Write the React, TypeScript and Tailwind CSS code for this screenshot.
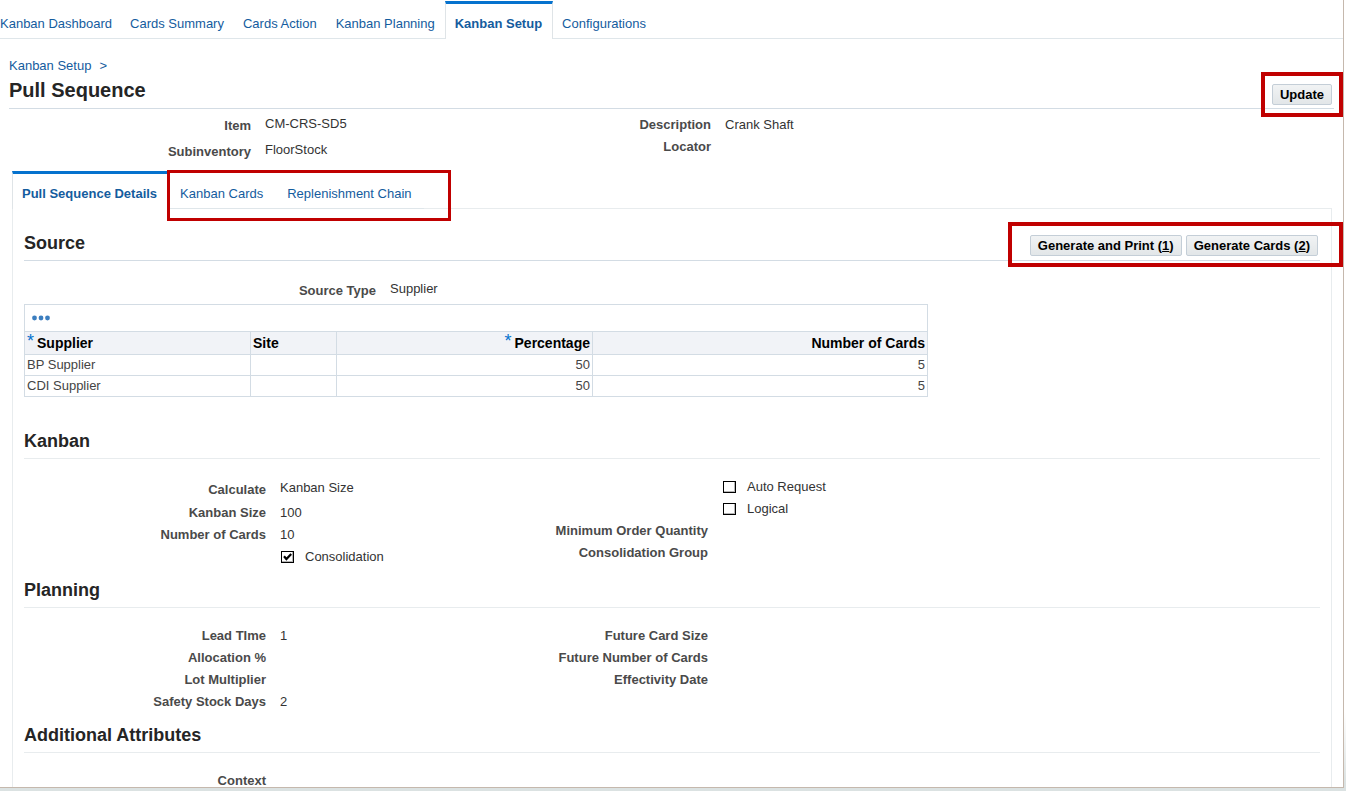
import React, { useState } from 'react';
import clsx from 'clsx';

interface TabItem {
  label: string;
  active?: boolean;
}

const mainTabs: TabItem[] = [
  { label: 'Kanban Dashboard' },
  { label: 'Cards Summary' },
  { label: 'Cards Action' },
  { label: 'Kanban Planning' },
  { label: 'Kanban Setup', active: true },
  { label: 'Configurations' },
];

const suppliers = [
  { supplier: 'BP Supplier', site: '', percentage: 50, cards: 5 },
  { supplier: 'CDI Supplier', site: '', percentage: 50, cards: 5 },
];

function Tab({ label, active, className }: TabItem & { className?: string }) {
  return (
    <a
      href="#"
      aria-current={active ? 'page' : undefined}
      className={clsx(
        'h-[38px] shrink-0 border-t-[3px] pt-3 leading-[15px] whitespace-nowrap text-[#145c9e]',
        active
          ? 'border-x border-x-[#dfe4e7] border-t-[#0572ce] pr-[10px] pl-[9px] font-bold'
          : 'border-b border-t-transparent border-b-[#dfe6ea]',
        className
      )}
    >
      {label}
    </a>
  );
}

function Button({ children }: { children: React.ReactNode }) {
  return (
    <button
      type="button"
      className="h-[21px] rounded-[2px] border border-[#c4ced7] bg-linear-to-b from-[#f1f3f4] to-[#e2e6e8] px-[7px] leading-[18px] font-bold whitespace-nowrap text-black"
    >
      {children}
    </button>
  );
}

// tall rows hang the label slightly lower than the value
function Field({ label, value, tall, labelWidth = 'w-[242px]' }: { label: string; value?: string; tall?: boolean; labelWidth?: string }) {
  return (
    <div className={clsx('flex gap-[14px]', tall ? 'h-6' : 'h-[22px]')}>
      <dt className={clsx('shrink-0 text-right font-bold text-[#4a4a4a]', labelWidth, tall ? 'leading-6' : 'leading-[22px]')}>{label}</dt>
      <dd className={clsx('text-[#333]', tall ? 'leading-5' : 'leading-[22px]')}>{value}</dd>
    </div>
  );
}

function CheckField({ label, defaultChecked = false }: { label: string; defaultChecked?: boolean }) {
  const [checked, setChecked] = useState(defaultChecked);
  return (
    <div className="flex h-[22px] items-center pl-[257px]">
      <label className="flex items-center gap-[11px] text-[#333]">
        <span className="relative flex">
          <input
            type="checkbox"
            checked={checked}
            onChange={(e) => setChecked(e.target.checked)}
            className="h-3 w-[13px] appearance-none border border-black bg-white shadow-[inset_-1px_-1px_0_#b5b5b5]"
          />
          {checked && (
            <svg viewBox="0 0 13 12" className="pointer-events-none absolute inset-0 h-3 w-[13px]" fill="none" stroke="#000" strokeWidth="2.2">
              <path d="M3 5.2 5.4 8 10.2 3" />
            </svg>
          )}
        </span>
        {label}
      </label>
    </div>
  );
}

function SectionHeader({ title, children, strong }: { title: string; children?: React.ReactNode; strong?: boolean }) {
  return (
    <div className={clsx('relative flex h-9 items-center justify-between border-b', strong ? 'border-[#d3dce4]' : 'border-[#e8ecee]')}>
      <h2 className="text-lg leading-7 font-bold text-[#252525]">{title}</h2>
      {children}
    </div>
  );
}

function Highlight({ className }: { className: string }) {
  return <div className={clsx('pointer-events-none absolute border-[#c00000]', className)} />;
}

function Required() {
  return <span className="self-start text-[18px] leading-[18px] font-normal text-[#0572ce]">*</span>;
}

function SupplierTable() {
  const cell = 'border border-[#d3dce4] px-[2px]';
  return (
    <div className="mt-px w-[904px] max-w-full">
      <div className="flex h-[27px] items-center border border-b-0 border-[#d3dce4] pl-[7px]">
        <button type="button" aria-label="More actions">
          <svg width="18" height="6" viewBox="0 0 18 6" fill="#3c7ebf">
            <circle cx="2.5" cy="3" r="2.4" />
            <circle cx="9" cy="3" r="2.4" />
            <circle cx="15.5" cy="3" r="2.4" />
          </svg>
        </button>
      </div>
      <table className="w-full table-fixed border-collapse text-[#444]">
        <colgroup>
          <col className="w-[226px]" />
          <col className="w-[86px]" />
          <col className="w-[256px]" />
          <col />
        </colgroup>
        <thead className="bg-[#f1f3f7] text-sm leading-[22px] text-black">
          <tr className="h-[23px]">
            <th className={clsx(cell, 'py-0 text-left')}>
              <div className="flex h-[22px] gap-[3px]"><Required />Supplier</div>
            </th>
            <th className={clsx(cell, 'py-0 text-left')}>Site</th>
            <th className={clsx(cell, 'py-0')}>
              <div className="flex h-[22px] justify-end gap-[3px]"><Required />Percentage</div>
            </th>
            <th className={clsx(cell, 'py-0 text-right')}>Number of Cards</th>
          </tr>
        </thead>
        <tbody className="leading-5">
          {suppliers.map((row) => (
            <tr key={row.supplier} className="h-[21px]">
              <td className={clsx(cell, 'py-0')}>{row.supplier}</td>
              <td className={clsx(cell, 'py-0')}>{row.site}</td>
              <td className={clsx(cell, 'py-0 text-right')}>{row.percentage}</td>
              <td className={clsx(cell, 'py-0 text-right')}>{row.cards}</td>
            </tr>
          ))}
        </tbody>
      </table>
    </div>
  );
}

export default function App() {
  return (
    <div className="h-screen overflow-hidden bg-linear-to-b from-white from-90% to-[#dbe2e2] to-99% pr-[2px] pb-[3px] font-['Liberation_Sans',Arial,sans-serif] text-[13px]">
      <div className="h-full overflow-hidden border-r border-b border-[#c5b8ad] bg-white">
        <nav className="flex pt-px">
          {mainTabs.map((tab, i) => (
            <Tab key={tab.label} {...tab} className={clsx(!tab.active && (i === 0 ? 'pr-[9px]' : 'pr-[10px] pl-[9px]'))} />
          ))}
          <div className="flex-1 border-b border-[#dfe6ea]" />
        </nav>

        <header className="px-[9px] pt-[17px]">
          <div className="flex gap-2 leading-5 text-[#145c9e]">
            <a href="#">Kanban Setup</a>
            <span>&gt;</span>
          </div>
          <div className="relative flex h-[33px] items-start justify-between border-b border-[#d3dce4]">
            <h1 className="text-xl leading-7 font-bold text-[#252525]">Pull Sequence</h1>
            <div className="flex self-end pr-[2px] pb-[3px]">
              <Button>Update</Button>
            </div>
            <Highlight className="-top-1 -right-[9px] h-[45px] w-[82px] border-4" />
          </div>
          <div className="grid grid-cols-[460px_1fr] pt-[5px]">
            <dl className="flex flex-col gap-[2px]">
              <Field label="Item" value="CM-CRS-SD5" tall />
              <Field label="Subinventory" value="FloorStock" tall />
            </dl>
            <dl>
              <Field label="Description" value="Crank Shaft" />
              <Field label="Locator" />
            </dl>
          </div>
        </header>

        <main className="pt-[7px] pr-[11px] pl-3">
          <div className="flex">
            <Tab label="Pull Sequence Details" active />
            <div className="relative flex">
              <Tab label="Kanban Cards" className="px-3" />
              <Tab label="Replenishment Chain" className="px-3" />
              <Highlight className="-top-px -left-px h-[51px] w-[284px] border-[3px]" />
            </div>
            <div className="flex-1 border-b border-[#e8ecee]" />
          </div>

          <div className="border-x border-[#e8ecee] px-[11px] pt-4 pb-10">
            <section>
              <SectionHeader title="Source" strong>
                <div className="flex gap-1 self-end pr-[2px] pb-1">
                  <Button>Generate and Print (<u>1</u>)</Button>
                  <Button>Generate Cards (<u>2</u>)</Button>
                </div>
                <Highlight className="-top-[3px] -right-[23px] h-[45px] w-[335px] border-4" />
              </SectionHeader>
              <dl className="pt-[18px]">
                <Field label="Source Type" value="Supplier" tall labelWidth="w-[352px]" />
              </dl>
              <SupplierTable />
            </section>

            <section className="pt-[26px]">
              <SectionHeader title="Kanban" />
              <div className="grid grid-cols-[442px_1fr] pt-[17px]">
                <dl className="pt-[2px]">
                  <Field label="Calculate" value="Kanban Size" tall />
                  <Field label="Kanban Size" value="100" />
                  <Field label="Number of Cards" value="10" />
                  <CheckField label="Consolidation" defaultChecked />
                </dl>
                <dl>
                  <CheckField label="Auto Request" />
                  <CheckField label="Logical" />
                  <Field label="Minimum Order Quantity" />
                  <Field label="Consolidation Group" />
                </dl>
              </div>
            </section>

            <section className="pt-1">
              <SectionHeader title="Planning" />
              <div className="grid grid-cols-[442px_1fr] pt-[17px]">
                <dl>
                  <Field label="Lead TIme" value="1" />
                  <Field label="Allocation %" />
                  <Field label="Lot Multiplier" />
                  <Field label="Safety Stock Days" value="2" />
                </dl>
                <dl>
                  <Field label="Future Card Size" />
                  <Field label="Future Number of Cards" />
                  <Field label="Effectivity Date" />
                </dl>
              </div>
            </section>

            <section className="pt-1">
              <SectionHeader title="Additional Attributes" />
              <dl className="pt-[17px]">
                <Field label="Context" />
              </dl>
            </section>
          </div>
        </main>
      </div>
    </div>
  );
}
